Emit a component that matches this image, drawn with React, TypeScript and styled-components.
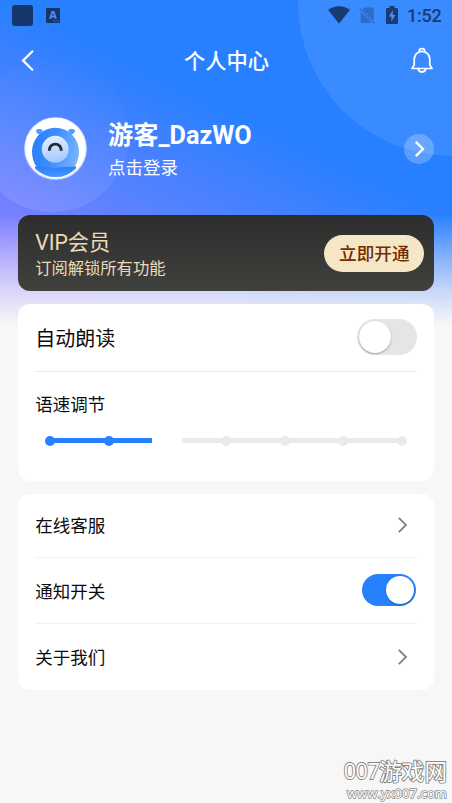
import React from "react";
import styled, { createGlobalStyle } from "styled-components";

const GlobalStyle = createGlobalStyle`
  * { box-sizing: border-box; }
  body { margin: 0; background: #f7f7f7; }
`;

const Screen = styled.div`
  position: relative;
  width: 452px;
  height: 803px;
  overflow: hidden;
  display: flex;
  flex-direction: column;
  font-family: Roboto, "Noto Sans CJK SC", sans-serif;
  color: #0c0c0c;
  background-color: #f7f7f7;
  background-image:
    linear-gradient(180deg, rgba(247, 247, 247, 0) 215px, rgba(247, 247, 247, 0.72) 290px, #f7f7f7 325px),
    linear-gradient(26deg, #8a7aff 50px, #7a80ff 98px, #5482ff 180px, #3c80ff 245px, #2680ff 300px);
  background-size: 100% 326px;
  background-repeat: no-repeat;
`;

const Bubble = styled.div<{ $x: number; $y: number; $r: number; $fill: string }>`
  position: absolute;
  left: ${(p) => p.$x - p.$r}px;
  top: ${(p) => p.$y - p.$r}px;
  width: ${(p) => p.$r * 2}px;
  height: ${(p) => p.$r * 2}px;
  border-radius: 50%;
  background: ${(p) => p.$fill};
`;

const StatusBar = styled.div`
  position: relative;
  height: 30px;
  padding: 0 10px 0 12px;
  display: flex;
  align-items: center;
  justify-content: space-between;
  color: #173b72;
`;

const StatusGroup = styled.div`
  display: flex;
  align-items: center;
`;

const AppSquare = styled.div`
  width: 21px;
  height: 21px;
  border-radius: 3px;
  margin-right: 13px;
  background: #14366b;
`;

const Clock = styled.span`
  width: 35px;
  margin-left: 9px;
  padding-top: 1px;
  font-size: 18px;
  font-weight: 500;
  line-height: 30px;
  letter-spacing: -0.2px;
  white-space: nowrap;
`;

const Icon = styled.svg<{ $ml?: number }>`
  display: block;
  flex: none;
  overflow: visible;
  margin-left: ${(p) => p.$ml ?? 0}px;
`;

const NavBar = styled.header`
  position: relative;
  height: 61px;
  padding: 0 18px 0 21px;
  display: grid;
  grid-template-columns: 40px 1fr 40px;
  align-items: center;
  > :last-child { justify-self: end; }
`;

const NavTitle = styled.h1`
  margin: 0;
  padding: 2px 2px 0 0;
  text-align: center;
  color: #fff;
  font-size: 21.3px;
  font-weight: 500;
  line-height: 30px;
`;

const Profile = styled.section`
  position: relative;
  height: 124px;
  padding: 0 18px 9px 24px;
  display: flex;
  align-items: center;
`;

const ProfileText = styled.div`
  flex: 1;
  margin-left: 21px;
  color: #fff;
`;

const UserName = styled.div`
  padding-top: 1px;
  font-size: 25.2px;
  font-weight: 700;
  line-height: 35px;
`;

const LoginHint = styled.div`
  font-size: 17.5px;
  line-height: 26px;
  margin-top: 2px;
`;

const RoundButton = styled.button`
  width: 30px;
  height: 30px;
  padding: 0 0 0 1px;
  border: 0;
  border-radius: 50%;
  display: flex;
  align-items: center;
  justify-content: center;
  background: rgba(255, 255, 255, 0.24);
`;

const VipCard = styled.section`
  position: relative;
  height: 76px;
  margin: 0 17.7px;
  padding: 0 10px 0 17.5px;
  border-radius: 12px;
  display: flex;
  align-items: center;
  justify-content: space-between;
  color: #ebdcb7;
  background: linear-gradient(180deg, #2d2d2d, #40403d);
`;

const VipTitle = styled.div`
  padding-top: 4px;
  font-size: 21.2px;
  line-height: 28px;
`;

const VipNote = styled.div`
  font-size: 16.3px;
  line-height: 24px;
`;

const OpenButton = styled.button`
  width: 100px;
  height: 37px;
  padding: 1px 0 0;
  border: 0;
  border-radius: 19px;
  font: 500 17.6px / 36px Roboto, "Noto Sans CJK SC", sans-serif;
  color: #732c00;
  background: #f5e6c6;
`;

const Card = styled.section<{ $height: number; $gap: number }>`
  position: relative;
  height: ${(p) => p.$height}px;
  margin: ${(p) => p.$gap}px 17.7px 0;
  padding: 0 17.6px;
  border-radius: 12px;
  background: #fff;
`;

const Row = styled.div<{ $height: number; $right?: number; $size?: number; $divider?: string }>`
  height: ${(p) => p.$height}px;
  padding-right: ${(p) => p.$right ?? 0}px;
  display: flex;
  align-items: center;
  justify-content: space-between;
  font-size: ${(p) => p.$size ?? 17.5}px;
  line-height: 30px;
  border-bottom: 1px solid ${(p) => p.$divider ?? "transparent"};
`;

const RowLabel = styled.span`
  padding-top: 2px;
`;

const Switch = styled.div<{ $on?: boolean; $w: number; $h: number }>`
  width: ${(p) => p.$w}px;
  height: ${(p) => p.$h}px;
  margin-bottom: 1px;
  padding: 2px;
  border-radius: ${(p) => p.$h / 2}px;
  display: flex;
  justify-content: ${(p) => (p.$on ? "flex-end" : "flex-start")};
  background: ${(p) => (p.$on ? "#2681ff" : "#e5e5e5")};
`;

const Knob = styled.div<{ $size: number }>`
  width: ${(p) => p.$size}px;
  height: ${(p) => p.$size}px;
  border-radius: 50%;
  background: #fff;
  box-shadow: 0 1px 2px rgba(0, 0, 0, 0.3);
`;

const SpeedLabel = styled.div`
  padding-top: 18px;
  font-size: 17.5px;
  line-height: 30px;
`;

const Slider = styled.div`
  position: relative;
  margin: 15.5px 9.7px 0;
  height: 10px;
  display: flex;
  align-items: center;
  justify-content: space-between;
`;

const Track = styled.div<{ $from: number; $width: number; $on?: boolean }>`
  position: absolute;
  top: 2.5px;
  left: ${(p) => p.$from}px;
  width: ${(p) => p.$width}px;
  height: 5px;
  background: ${(p) => (p.$on ? "#2681ff" : "#e9eaec")};
`;

const Stop = styled.span<{ $state: "on" | "current" | "off" }>`
  position: relative;
  width: 10px;
  height: 10px;
  border-radius: 50%;
  background: ${(p) => ({ on: "#2681ff", current: "#fff", off: "#e9eaec" })[p.$state]};
`;

const Watermark = styled.footer`
  position: absolute;
  right: 5px;
  bottom: 2px;
  display: flex;
  flex-direction: column;
  align-items: flex-end;
  color: #fff;
  paint-order: stroke fill;
`;

const SiteName = styled.div`
  display: flex;
  align-items: center;
  height: 24px;
  font: 400 22.6px / 24px "Noto Sans CJK SC", sans-serif;
  white-space: nowrap;
  -webkit-text-stroke: 1.8px #858585;
`;

const SiteNumber = styled.span`
  font: 400 21.5px / 24px "Open Sans", sans-serif;
  letter-spacing: -0.5px;
`;

const SiteUrl = styled.div`
  margin-top: 2px;
  font: 400 13px / 16px "Open Sans", sans-serif;
  letter-spacing: 0.1px;
  white-space: nowrap;
  -webkit-text-stroke: 1.5px #8c8c8c;
`;

const Chevron = ({ color, width = 2 }: { color: string; width?: number }) => (
  <Icon width="9" height="16" viewBox="0 0 9 16" fill="none" stroke={color} strokeWidth={width}>
    <path d="M.8 .8 8 8 .8 15.2" />
  </Icon>
);

const Avatar = () => (
  <Icon width="63" height="63" viewBox="0 0 63 63">
    <defs>
      <linearGradient id="body" x1="0" y1="0.4" x2="1" y2="0.6">
        <stop offset="0" stopColor="#2680ff" />
        <stop offset="0.45" stopColor="#3c8dff" />
        <stop offset="1" stopColor="#79b2ff" />
      </linearGradient>
      <linearGradient id="face" x1="0" y1="0" x2="0.2" y2="1">
        <stop offset="0" stopColor="#e9f2ff" />
        <stop offset="1" stopColor="#a5caff" />
      </linearGradient>
      <linearGradient id="base" x1="0" y1="0" x2="0" y2="1">
        <stop offset="0" stopColor="#2a7ff8" />
        <stop offset="1" stopColor="#4c9bff" />
      </linearGradient>
      <clipPath id="disc"><circle cx="31.5" cy="31.5" r="28.6" /></clipPath>
    </defs>
    <circle cx="31.5" cy="31.5" r="31.3" fill="#d5e5ff" />
    <circle cx="31.5" cy="31.2" r="30.2" fill="#fff" />
    <path d="M12 13q3.500-2.200 7 .3l-3 4.200q-3.800-.500-4-4.500ZM51 13q-3.500-2.200-7 .3l3 4.200q3.800-.500 4-4.500Z" fill="#4f9cff" />
    <path d="M13 50.500Q8 43.500 8 34.500a23.500 23.700 0 0 1 47 0Q55 43.500 50 50.500Z" fill="url(#body)" />
    <circle cx="31.2" cy="32.2" r="13.4" fill="url(#face)" />
    <path d="M25.4 33.800v-.8a5.900 5.900 0 0 1 11.800 0v.8" fill="none" stroke="#222b38" strokeWidth="2.9" />
    <path d="M11 49.500Q31.500 51 52 49.500L53 62H10Z" fill="url(#base)" clipPath="url(#disc)" />
  </Icon>
);

const stops = ["on", "on", "current", "off", "off", "off", "off"] as const;

export default function App() {
  return (
    <Screen>
      <GlobalStyle />
      <Bubble $x={452} $y={2} $r={154} $fill="rgba(255,255,255,.09)" />
      <Bubble $x={52} $y={135} $r={77} $fill="linear-gradient(20deg, rgba(255,255,255,.12), rgba(255,255,255,.06) 45%, rgba(255,255,255,0) 90%)" />

      <StatusBar>
        <StatusGroup>
          <AppSquare />
          <Icon width="14" height="15" viewBox="0 0 14 15">
            <rect width="14" height="15" rx="1" fill="#14366b" />
            <path d="M4 10.800 6.400 4h1.200l2.400 6.800M4.900 8.600h4.200" fill="none" stroke="#4a8cf0" strokeWidth="1.9" />
            <path d="M7.5 13h1M9.5 13h1M11.5 13h1" stroke="#4a86e2" />
          </Icon>
        </StatusGroup>
        <StatusGroup>
          <Icon width="22" height="18" viewBox="0 0 22 18">
            <path d="M0 3.7Q11-3.7 22 3.7L11 17.8Z" fill="currentColor" />
          </Icon>
          <Icon $ml={9} width="16" height="17" viewBox="0 0 16 17">
            <path d="M6 .5H14q.8 0 .8.8v12.200L3.600 2.300ZM1.8 4.800 13 16H2.6q-.8 0-.8-.8Z" fill="#2c6cc4" />
            <path d="m.2 .6 15.400 15.800" stroke="#2a66b8" strokeWidth="1.2" />
          </Icon>
          <Icon $ml={11} width="12" height="18" viewBox="0 0 12 18">
            <path d="M3.5 0h5v2H11q1 0 1 1v14q0 1-1 1H1q-1 0-1-1V3q0-1 1-1h2.500Z" fill="currentColor" />
            <path d="M6.8 4.3 2.800 10.600H5.400V15.600L9.400 9H6.800Z" fill="#4a90f5" />
          </Icon>
          <Clock>1:52</Clock>
        </StatusGroup>
      </StatusBar>

      <NavBar>
        <Icon width="13" height="20" viewBox="0 0 13 20" fill="none" stroke="#fff" strokeWidth="2.2" strokeLinecap="round">
          <path d="M11.300 .500 2 9.600 11.300 18.700" />
        </Icon>
        <NavTitle>个人中心</NavTitle>
        <Icon width="24" height="26" viewBox="0 0 24 26" fill="none" stroke="#fff" strokeWidth="1.7" strokeLinejoin="round" strokeLinecap="round">
          <path d="M9.300 3.500V2.900a2.700 2.200 0 0 1 5.400 0V3.500" />
          <path d="M2 20.500h20L19.800 17V11.200a7.800 7.800 0 0 0-15.600 0V17Z" />
          <path d="M8.200 20.700q.7 3.200 3.800 3.200t3.800-3.200" />
        </Icon>
      </NavBar>

      <Profile>
        <Avatar />
        <ProfileText>
          <UserName>游客_DazWO</UserName>
          <LoginHint>点击登录</LoginHint>
        </ProfileText>
        <RoundButton aria-label="profile"><Chevron color="#fff" width={2.4} /></RoundButton>
      </Profile>

      <VipCard>
        <div>
          <VipTitle>VIP会员</VipTitle>
          <VipNote>订阅解锁所有功能</VipNote>
        </div>
        <OpenButton>立即开通</OpenButton>
      </VipCard>

      <Card $height={177} $gap={13}>
        <Row $height={68} $size={20} $divider="#e8e8e8">
          <RowLabel>自动朗读</RowLabel>
          <Switch $w={60} $h={36}><Knob $size={32} /></Switch>
        </Row>
        <SpeedLabel>语速调节</SpeedLabel>
        <Slider>
          <Track $on $from={5} $width={102.5} />
          <Track $from={137} $width={220} />
          {stops.map((s, i) => <Stop key={i} $state={s} />)}
        </Slider>
      </Card>

      <Card $height={196} $gap={12.5}>
        <Row $height={64.5} $right={10} $divider="#f2f2f2">
          <RowLabel>在线客服</RowLabel>
          <Chevron color="#808080" width={1.8} />
        </Row>
        <Row $height={66} $right={1} $divider="#f2f2f2">
          <RowLabel>通知开关</RowLabel>
          <Switch $on $w={54} $h={32}><Knob $size={28} /></Switch>
        </Row>
        <Row $height={66} $right={10}>
          <RowLabel>关于我们</RowLabel>
          <Chevron color="#808080" width={1.8} />
        </Row>
      </Card>

      <Watermark>
        <SiteName><SiteNumber>007</SiteNumber>游戏网</SiteName>
        <SiteUrl>www.yx007.com</SiteUrl>
      </Watermark>
    </Screen>
  );
}
